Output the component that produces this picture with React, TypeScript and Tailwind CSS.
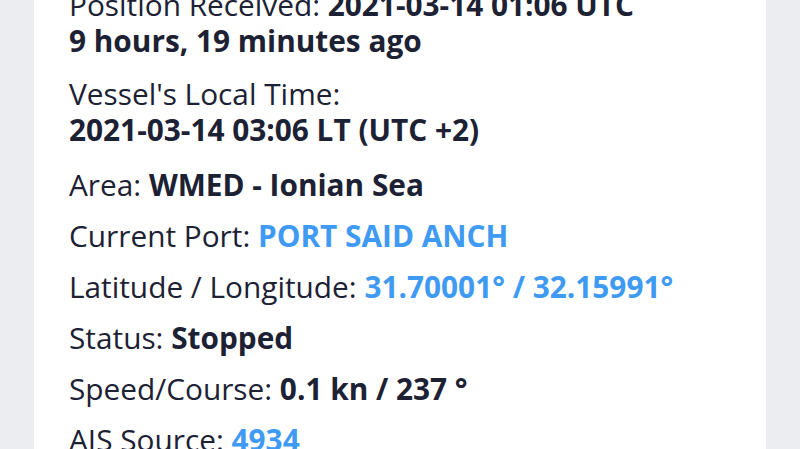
const rows: { label: string; value?: string; tone?: 'bold' | 'link'; stacked?: boolean; sub?: string; extra?: string }[] = [
  { label: 'Position Received:', value: '2021-03-14 01:06 UTC', tone: 'bold', sub: '9 hours, 19 minutes ago', extra: 'pb-[2px]' },
  { label: "Vessel's Local Time:", value: '2021-03-14 03:06 LT (UTC +2)', tone: 'bold', stacked: true, extra: 'pb-[4px]' },
  { label: 'Area:', value: 'WMED - Ionian Sea', tone: 'bold' },
  { label: 'Current Port:', value: 'PORT SAID ANCH', tone: 'link' },
  { label: 'Latitude / Longitude:', value: '31.70001° / 32.15991°', tone: 'link' },
  { label: 'Status:', value: 'Stopped', tone: 'bold' },
  { label: 'Speed/Course:', value: '0.1 kn / 237 °', tone: 'bold' },
  { label: 'AIS Source:', value: '4934', tone: 'link' },
];

export default function App() {
  return (
    <div
      className="h-[449px] w-[800px] overflow-hidden bg-[#ebedf1] px-[34px]"
      style={{ fontFamily: '"Open Sans", "Noto Sans", sans-serif' }}
    >
      <div className="flex h-full flex-col overflow-hidden bg-white px-[35px]">
        <div className="-mt-[13px] flex flex-col gap-[15px] text-[29.8px] leading-[36px] text-[#1c2134]">
          {rows.map((row) => {
            const valueCls = row.tone === 'link' ? 'font-bold text-[#3f9af4]' : 'font-bold';
            return (
              <div key={row.label} className={row.extra}>
                {row.stacked ? (
                  <>
                    <div>{row.label}</div>
                    <div className={valueCls}>{row.value}</div>
                  </>
                ) : (
                  <div>
                    {row.label} <span className={valueCls}>{row.value}</span>
                  </div>
                )}
                {row.sub && <div className="font-bold">{row.sub}</div>}
              </div>
            );
          })}
        </div>
      </div>
    </div>
  );
}
